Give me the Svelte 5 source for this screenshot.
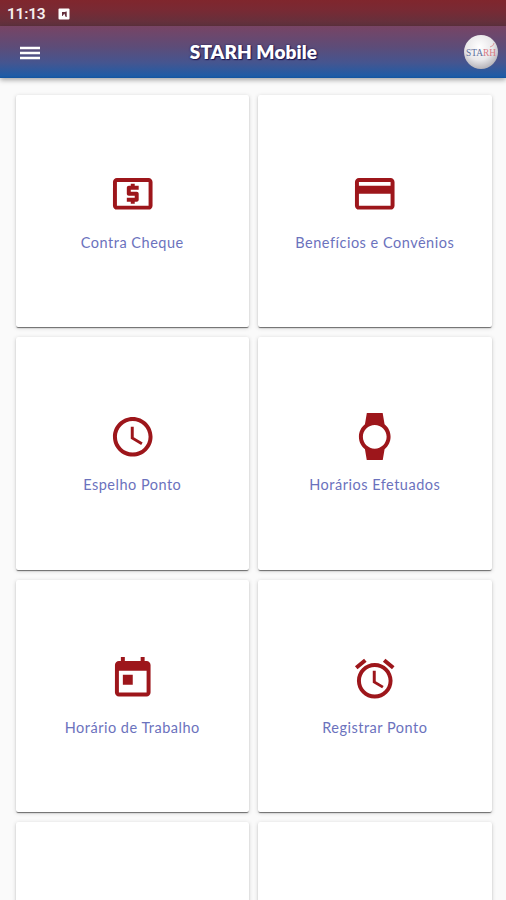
<script lang="ts">
	type Tile = { label: string; icon: string };

	const tiles: Tile[] = [
		{
			label: 'Contra Cheque',
			icon: 'M11 17h2v-1h1c.55 0 1-.45 1-1v-3c0-.55-.45-1-1-1h-3v-1h4V8h-2V7h-2v1h-1c-.55 0-1 .45-1 1v3c0 .55.45 1 1 1h3v1H9v2h2v1zm9-13H4c-1.11 0-1.99.89-1.99 2L2 18c0 1.11.89 2 2 2h16c1.11 0 2-.89 2-2V6c0-1.11-.89-2-2-2zm0 14H4V6h16v12z'
		},
		{
			label: 'Benefícios e Convênios',
			icon: 'M20 4H4c-1.11 0-1.99.89-1.99 2L2 18c0 1.11.89 2 2 2h16c1.11 0 2-.89 2-2V6c0-1.11-.89-2-2-2zm0 14H4v-6h16v6zm0-10H4V6h16v2z'
		},
		{
			label: 'Espelho Ponto',
			icon: 'M11.99 2C6.47 2 2 6.48 2 12s4.47 10 9.99 10C17.52 22 22 17.52 22 12S17.52 2 11.99 2zM12 20c-4.42 0-8-3.58-8-8s3.58-8 8-8 8 3.58 8 8-3.58 8-8 8zm.5-13H11v6l5.25 3.15.75-1.23-4.5-2.67z'
		},
		{
			label: 'Horários Efetuados',
			icon: 'M20 12c0-2.54-1.19-4.81-3.04-6.27L16 0H8l-.95 5.73C5.19 7.19 4 9.45 4 12s1.19 4.81 3.05 6.27L8 24h8l.96-5.73C18.81 16.81 20 14.54 20 12zM6 12c0-3.31 2.69-6 6-6s6 2.69 6 6-2.69 6-6 6-6-2.69-6-6z'
		},
		{
			label: 'Horário de Trabalho',
			icon: 'M19 3h-1V1h-2v2H8V1H6v2H5c-1.11 0-1.99.9-1.99 2L3 19c0 1.1.89 2 2 2h14c1.1 0 2-.9 2-2V5c0-1.1-.9-2-2-2zm0 16H5V8h14v11zM7 10h5v5H7z'
		},
		{
			label: 'Registrar Ponto',
			icon: 'M22 5.72l-4.6-3.86-1.29 1.53 4.6 3.86L22 5.72zM7.88 3.39L6.6 1.86 2 5.71l1.29 1.53 4.59-3.85zM12.5 8H11v6l4.75 2.85.75-1.23-4-2.37V8zM12 4c-4.97 0-9 4.03-9 9s4.02 9 9 9c4.97 0 9-4.03 9-9s-4.03-9-9-9zm0 16c-3.87 0-7-3.13-7-7s3.13-7 7-7 7 3.13 7 7-3.13 7-7 7z'
		},
		// last row is cut off by the bottom of the screen
		{ label: '', icon: '' },
		{ label: '', icon: '' }
	];
</script>

<div class="screen">
	<div class="status-bar">
		<span class="time">11:13</span>
		<svg class="notice" viewBox="0 0 12 12">
			<rect x="0.5" y="0.5" width="11" height="11" rx="1" fill="#fff" />
			<path d="M4 4h3.5v-.5h1.2V9H7.5V8H4z" fill="#64303d" />
			<path d="M4.6 8L6.4 5.6 7.2 8z" fill="#fff" />
		</svg>
	</div>
	<header class="toolbar">
		<button class="menu" aria-label="Menu">
			<svg viewBox="0 0 24 24">
				<path d="M2 18.2h20v-2.4H2v2.4zm0-5h20v-2.4H2v2.4zm0-7.4v2.4h20V5.8H2z" fill="currentColor" />
			</svg>
		</button>
		<h1>STARH Mobile</h1>
		<svg class="avatar" viewBox="0 0 34 34">
			<defs>
				<radialGradient id="ball" cx="0.45" cy="0.35" r="0.65">
					<stop offset="0" stop-color="#ffffff" />
					<stop offset="0.6" stop-color="#e9e8ea" />
					<stop offset="1" stop-color="#b5b3b9" />
				</radialGradient>
				<linearGradient id="brand">
					<stop offset="0.6" stop-color="#5c6c9b" />
					<stop offset="0.6" stop-color="#d77880" />
				</linearGradient>
			</defs>
			<circle cx="17" cy="17" r="17" fill="url(#ball)" />
			<text x="2" y="20.5" textLength="30" lengthAdjust="spacingAndGlyphs" fill="url(#brand)">STARH</text>
			<path d="M26 12q4-1 4-4" fill="none" stroke="#df9a9d" stroke-width="1" />
		</svg>
	</header>

	<main class="grid">
		{#each tiles as tile}
			<div class="card">
				{#if tile.icon}
					<svg class="icon" viewBox="0 0 24 24"><path d={tile.icon} /></svg>
					<span class="label">{tile.label}</span>
				{/if}
			</div>
		{/each}
	</main>
</div>

<style>
	:global(body) {
		margin: 0;
		overflow: hidden;
	}

	.screen {
		height: 900px;
		overflow: hidden;
		display: flex;
		flex-direction: column;
		background: #fafafa;
		font-family: Lato, 'Open Sans', sans-serif;
	}

	.status-bar {
		flex: none;
		height: 26px;
		box-sizing: border-box;
		padding: 1px 7px 0;
		display: flex;
		align-items: center;
		gap: 13px;
		color: #f6eeee;
		background: linear-gradient(#80262d, #782a34 40%, #5f323f);
	}

	.time {
		width: 38px;
		font: 600 15.5px/26px Roboto, sans-serif;
		letter-spacing: -0.25px;
		white-space: nowrap;
	}

	.notice {
		width: 12px;
		height: 12px;
	}

	.toolbar {
		flex: none;
		height: 52px;
		box-sizing: border-box;
		padding: 0 8px 0 18px;
		display: grid;
		grid-template-columns: 34px 1fr 34px;
		align-items: center;
		color: #fff;
		background: linear-gradient(#784464, #5d4c78 40%, #46558f 70%, #205ca6 96%, #1355a0);
		box-shadow: 0 2px 5px rgba(0, 0, 0, 0.35);
		z-index: 1;
	}

	.menu {
		width: 24px;
		height: 24px;
		margin-top: 1px;
		padding: 0;
		border: 0;
		background: none;
		color: #fff;
	}

	.menu svg {
		display: block;
		width: 24px;
		height: 24px;
	}

	h1 {
		margin: 0;
		padding-right: 9px;
		text-align: center;
		font-size: 19px;
		font-weight: 800;
		line-height: 24px;
		letter-spacing: 0.1px;
		text-shadow: 0 0 2px #1d1650, 1px 1px 1px #1d1650;
	}

	.avatar {
		width: 34px;
		height: 34px;
	}

	.avatar text {
		font: 10.5px 'Liberation Serif', serif;
	}

	.grid {
		padding: 16.5px 14.5px 0 15.5px;
		display: grid;
		grid-template-columns: 1fr 1fr;
		grid-auto-rows: 232.5px;
		gap: 10px 9px;
	}

	.card {
		box-sizing: border-box;
		padding-top: 75.5px;
		display: flex;
		flex-direction: column;
		align-items: center;
		background: #fff;
		border-radius: 2px;
		box-shadow: 0 2px 1px -1px rgba(0, 0, 0, 0.35), 0 1px 1px rgba(0, 0, 0, 0.25),
			0 1px 4px rgba(0, 0, 0, 0.18);
	}

	.icon {
		width: 47.5px;
		height: 47.5px;
		fill: #9d161b;
	}

	.label {
		margin-top: 15px;
		font-size: 14.5px;
		font-weight: 400;
		line-height: 20px;
		letter-spacing: 0.5px;
		color: #6b72bd;
		white-space: nowrap;
	}
</style>
